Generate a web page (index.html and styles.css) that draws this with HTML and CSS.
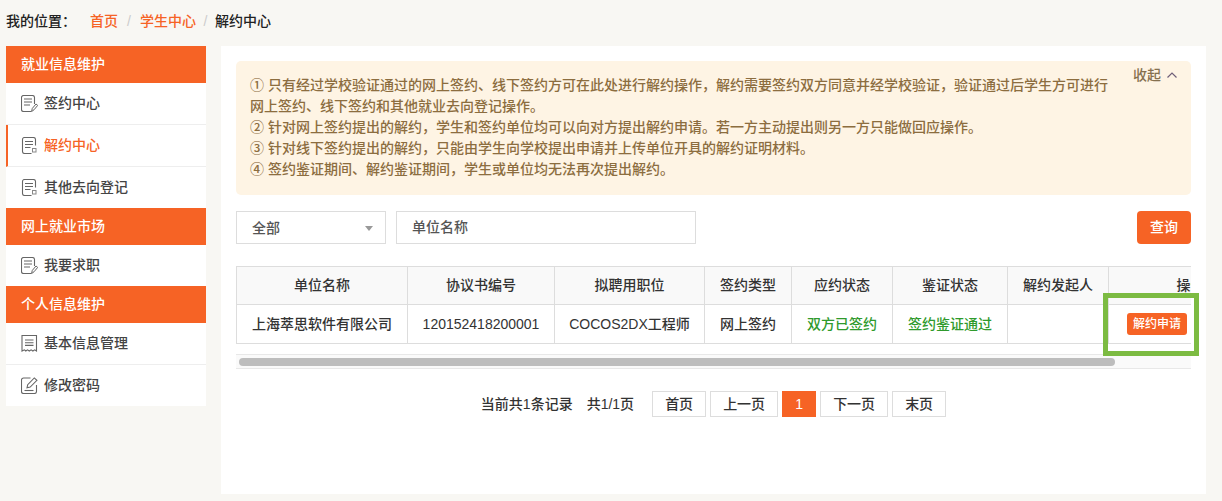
FILE: index.html
```html
<!DOCTYPE html>
<html lang="zh-CN">
<head>
<meta charset="utf-8">
<title>解约中心</title>
<link rel="stylesheet" href="styles.css">
</head>
<body>
<svg class="defs" width="0" height="0" aria-hidden="true">
  <symbol id="i-edit" viewBox="0 0 17 17">
    <path d="M13.500 9V2.500a2 2 0 0 0-2-2h-9a2 2 0 0 0-2 2v12a2 2 0 0 0 2 2H10" fill="none" stroke="#666" stroke-width="1.100"/>
    <path d="M3 4h8M3 7h8M3 10h6" stroke="#666" stroke-width="1.100"/>
    <path d="M10.500 16.600l.8-3.200 3.700-4.400 1.700 1.400-3.700 4.400z" fill="#fff" stroke="#666" stroke-width="1"/>
  </symbol>
  <symbol id="i-doc" viewBox="0 0 17 17">
    <path d="M14.500 8.500V2.500a2 2 0 0 0-2-2h-9a2 2 0 0 0-2 2v12a2 2 0 0 0 2 2h7" fill="none" stroke="#666" stroke-width="1.100"/>
    <path d="M4 4.500h8M4 7.500h8M4 10.500h5.500" stroke="#666" stroke-width="1.100"/>
    <rect x="11.500" y="11.500" width="3.500" height="3.500" fill="#fff" stroke="#888" stroke-width="1"/>
  </symbol>
  <symbol id="i-bill" viewBox="0 0 17 17">
    <path d="M1 16V.5h14.500V16l-1.800-1.200-1.800 1.200-1.800-1.200-1.800 1.200-1.800-1.200-1.700 1.200-1.400-1.200z" fill="none" stroke="#666" stroke-width="1.100"/>
    <path d="M4 5h8.500M4 7.700h8.500M4 10.400h8.500" stroke="#666" stroke-width="1.100"/>
  </symbol>
  <symbol id="i-pen" viewBox="0 0 17 17">
    <path d="M9.500 1H2.500a2 2 0 0 0-2 2v11.500a2 2 0 0 0 2 2h11a2 2 0 0 0 2-2V8" fill="none" stroke="#666" stroke-width="1.100"/>
    <path d="M6 10.800l.7-3.100L13.300.9l2.600 2.400-6.700 6.800z" fill="none" stroke="#666" stroke-width="1.100"/>
    <path d="M3.500 13.500h9" stroke="#666" stroke-width="1.100"/>
  </symbol>
</svg>

<nav class="crumbs">
  <span class="crumbs-label">我的位置：</span>
  <a class="crumb-link" href="#">首页</a>
  <span class="crumb-sep">/</span>
  <a class="crumb-link" href="#">学生中心</a>
  <span class="crumb-sep crumb-sep-tight">/</span>
  <span class="crumb-current">解约中心</span>
</nav>

<div class="layout">
  <aside class="sidebar">
    <h3 class="side-head">就业信息维护</h3>
    <a class="side-item" href="#"><svg class="side-icon"><use href="#i-edit"/></svg>签约中心</a>
    <a class="side-item is-active" href="#"><svg class="side-icon"><use href="#i-doc"/></svg>解约中心</a>
    <a class="side-item is-last" href="#"><svg class="side-icon"><use href="#i-doc"/></svg>其他去向登记</a>
    <h3 class="side-head">网上就业市场</h3>
    <a class="side-item is-last" href="#"><svg class="side-icon"><use href="#i-edit"/></svg>我要求职</a>
    <h3 class="side-head">个人信息维护</h3>
    <a class="side-item" href="#"><svg class="side-icon"><use href="#i-bill"/></svg>基本信息管理</a>
    <a class="side-item is-last" href="#"><svg class="side-icon"><use href="#i-pen"/></svg>修改密码</a>
  </aside>

  <main class="panel">
    <section class="notice">
      <div class="notice-text">
        <p>① 只有经过学校验证通过的网上签约、线下签约方可在此处进行解约操作，解约需要签约双方同意并经学校验证，验证通过后学生方可进行网上签约、线下签约和其他就业去向登记操作。</p>
        <p>② 针对网上签约提出的解约，学生和签约单位均可以向对方提出解约申请。若一方主动提出则另一方只能做回应操作。</p>
        <p>③ 针对线下签约提出的解约，只能由学生向学校提出申请并上传单位开具的解约证明材料。</p>
        <p>④ 签约鉴证期间、解约鉴证期间，学生或单位均无法再次提出解约。</p>
      </div>
      <a class="notice-toggle" href="#">收起<svg class="chevron" width="10" height="6" viewBox="0 0 10 6"><path d="M.5 5.500L5 1l4.500 4.500" fill="none" stroke="#6f5f78" stroke-width="1.200"/></svg></a>
    </section>

    <form class="filters">
      <div class="select-box"><span>全部</span></div>
      <input class="text-input" type="text" placeholder="单位名称">
      <button class="search-btn" type="button">查询</button>
    </form>

    <div class="table-clip">
      <table class="grid">
        <colgroup>
          <col class="c1"><col class="c2"><col class="c3"><col class="c4"><col class="c5"><col class="c6"><col class="c7"><col class="c8">
        </colgroup>
        <thead>
          <tr><th>单位名称</th><th>协议书编号</th><th>拟聘用职位</th><th>签约类型</th><th>应约状态</th><th>鉴证状态</th><th>解约发起人</th><th>操作</th></tr>
        </thead>
        <tbody>
          <tr>
            <td>上海萃思软件有限公司</td>
            <td>120152418200001</td>
            <td>COCOS2DX工程师</td>
            <td>网上签约</td>
            <td class="ok">双方已签约</td>
            <td class="ok">签约鉴证通过</td>
            <td></td>
            <td class="actions"><button class="mini-btn" type="button">解约申请</button></td>
          </tr>
        </tbody>
      </table>
    </div>
    <div class="scrollbar"><div class="scrollbar-thumb"></div></div>

    <div class="pager">
      <span class="pager-info">当前共1条记录</span>
      <span class="pager-info pager-total">共1/1页</span>
      <a class="page page-wide-sm" href="#">首页</a>
      <a class="page page-wide" href="#">上一页</a>
      <a class="page page-current" href="#">1</a>
      <a class="page page-wide" href="#">下一页</a>
      <a class="page page-wide-sm" href="#">末页</a>
    </div>

    <div class="callout" aria-hidden="true"></div>
  </main>
</div>
</body>
</html>
```

FILE: styles.css
```css
* { box-sizing: border-box; }
html, body { margin: 0; height: 100%; overflow: hidden; }
body {
  background: #f8f7f3;
  color: #333;
  font: 500 14px/21px "Liberation Sans", "Noto Sans CJK SC", sans-serif;
}
a { color: inherit; text-decoration: none; }
.defs { position: absolute; }

.crumbs {
  display: flex;
  align-items: center;
  height: 46px;
  padding: 0 0 4px 6px;
  color: #222;
}
.crumbs-label { width: 84px; }
.crumb-link { color: #f66325; }
.crumb-sep { width: 22px; text-align: center; color: #ccc; }
.crumb-sep-tight { width: 19px; }
.crumb-current { color: #222; }

.layout {
  display: grid;
  grid-template-columns: 200px 985px;
  column-gap: 15px;
  padding-left: 6px;
}

.sidebar { align-self: start; background: #fff; }
.side-head {
  margin: 0;
  height: 37px;
  padding-left: 15px;
  background: #f66325;
  color: #fff;
  font-size: 14px;
  font-weight: 500;
  line-height: 36px;
}
.side-item {
  display: flex;
  align-items: center;
  height: 42px;
  padding-left: 15px;
  border-bottom: 1px solid #eee;
  color: #444;
}
.side-item.is-last { height: 41px; border-bottom: 0; }
.side-item.is-active {
  padding-left: 13px;
  border-left: 2px solid #f66325;
  color: #f66325;
}
.side-icon { width: 17px; height: 17px; margin-right: 6px; flex: none; }

.panel {
  position: relative;
  height: 448px;
  padding: 15px;
  background: #fff;
}

.notice {
  display: flex;
  justify-content: space-between;
  height: 134px;
  padding: 14px 14px 0 14px;
  border-radius: 5px;
  background: #fef4e4;
  color: #8c6d3f;
}
.notice-text { width: 864px; }
.notice-text p { margin: 0; }
.notice-toggle {
  margin-top: -10px;
  height: 21px;
  color: #85704f;
  white-space: nowrap;
}
.chevron { margin-left: 6px; vertical-align: 2px; }

.filters { display: flex; margin-top: 16px; height: 33px; }
.select-box {
  position: relative;
  width: 150px;
  padding-left: 15px;
  border: 1px solid #ddd;
  line-height: 32px;
  color: #555;
}
.select-box::after {
  content: "";
  position: absolute;
  top: 14px;
  right: 12px;
  border: 4px solid transparent;
  border-top: 5px solid #999;
  border-bottom: 0;
}
.text-input {
  width: 300px;
  margin-left: 10px;
  padding: 0 15px;
  border: 1px solid #ddd;
  border-radius: 0;
  outline: 0;
  font: inherit;
}
.text-input::placeholder { color: #555; opacity: 1; }
.search-btn {
  margin-left: auto;
  width: 54px;
  padding: 0;
  border: 0;
  border-radius: 4px;
  background: #f66325;
  color: #fff;
  font: inherit;
}

.table-clip {
  margin-top: 22px;
  height: 78px;
  overflow: hidden;
}
.grid {
  table-layout: fixed;
  width: 1036px;
  border-collapse: collapse;
  color: #333;
}
.c1 { width: 171px; }
.c2 { width: 147px; }
.c3 { width: 150px; }
.c4 { width: 87px; }
.c5 { width: 101px; }
.c6 { width: 115px; }
.c7 { width: 101px; }
.c8 { width: 164px; }
.grid th, .grid td {
  padding: 0;
  border: 1px solid #ddd;
  text-align: center;
  font-weight: 500;
  white-space: nowrap;
}
.grid th { height: 38px; background: #f9f9f9; }
.grid td { height: 39px; }
.grid td.ok { color: #2f9a2c; }
.grid td.actions { padding-left: 18px; text-align: left; }
.mini-btn {
  display: block;
  width: 60px;
  height: 22px;
  padding: 0;
  border: 0;
  border-radius: 3px;
  background: #f66325;
  color: #fff;
  font: 500 12px/22px "Liberation Sans", "Noto Sans CJK SC", sans-serif;
}

.scrollbar {
  margin-top: 10px;
  height: 15px;
  padding: 3px 3px;
  background: #fafafa;
  border-top: 1px solid #e8e8e8;
  border-bottom: 1px solid #e8e8e8;
}
.scrollbar-thumb {
  width: 876px;
  height: 8px;
  border-radius: 4px;
  background: #bdbdbd;
}

.pager {
  display: flex;
  justify-content: center;
  align-items: center;
  gap: 4px;
  margin-top: 22px;
  height: 26px;
  color: #333;
}
.pager-info { white-space: nowrap; }
.pager-total { margin-left: 10px; margin-right: 14px; }
.page {
  height: 26px;
  border: 1px solid #ddd;
  text-align: center;
  line-height: 24px;
}
.page-wide-sm { width: 54px; }
.page-wide { width: 68px; }
.page-current { width: 34px; border-color: #f66325; background: #f66325; color: #fff; }

.callout {
  position: absolute;
  left: 882px;
  top: 247px;
  width: 96px;
  height: 63px;
  border: 5px solid #7cbb42;
}
```
